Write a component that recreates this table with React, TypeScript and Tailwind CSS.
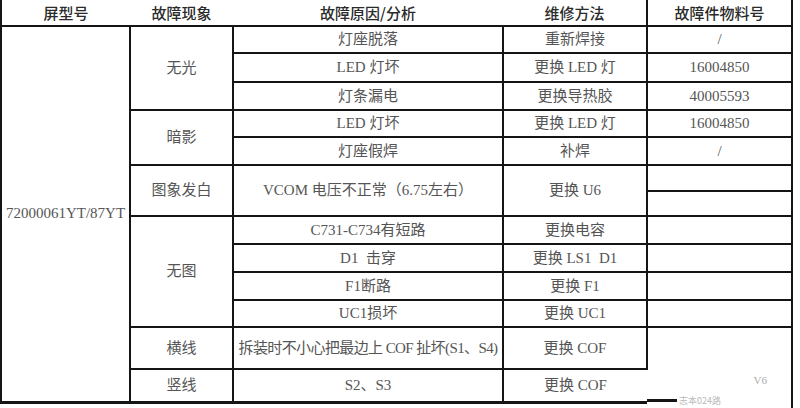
import React from "react";

const B = "border-[#151515]";
const body = "font-['Liberation_Serif','Noto_Sans_CJK_SC',serif] text-[15px] text-[#555] text-center align-middle p-0 leading-none whitespace-nowrap";
const cell = `${body} border-2 ${B}`;
const head = "font-['Noto_Sans_CJK_SC',sans-serif] font-medium text-[15px] text-[#2a2a2a] text-center p-0 leading-none";

export default function App() {
  return (
    <div className="w-[800px] h-[408px] bg-white overflow-hidden">
      <table className="border-collapse table-fixed w-[791px]">
        <colgroup>
          <col className="w-[129px]" />
          <col className="w-[103px]" />
          <col className="w-[270px]" />
          <col className="w-[144px]" />
          <col className="w-[145px]" />
        </colgroup>
        <tbody>
          <tr className="h-[26px]">
            {["屏型号", "故障现象", "故障原因/分析", "维修方法"].map((t, i) => (
              <td key={t} className={`${head} border-b-2 ${B} ${i === 0 ? "border-l-2" : ""}`}>
                {t}
              </td>
            ))}
            <td className={`${head} border-b-2 border-l-2 border-r-2 ${B}`}>故障件物料号</td>
          </tr>
          <tr className="h-[27px]">
            <td rowSpan={13} className={`${cell} border-b-[3px]`}>72000061YT/87YT</td>
            <td rowSpan={3} className={cell}>无光</td>
            <td className={cell}>灯座脱落</td>
            <td className={cell}>重新焊接</td>
            <td className={cell}>/</td>
          </tr>
          <tr className="h-[29px]">
            <td className={cell}>LED 灯坏</td>
            <td className={cell}>更换 LED 灯</td>
            <td className={cell}>16004850</td>
          </tr>
          <tr className="h-[28px]">
            <td className={cell}>灯条漏电</td>
            <td className={cell}>更换导热胶</td>
            <td className={cell}>40005593</td>
          </tr>
          <tr className="h-[27px]">
            <td rowSpan={2} className={cell}>暗影</td>
            <td className={cell}>LED 灯坏</td>
            <td className={cell}>更换 LED 灯</td>
            <td className={cell}>16004850</td>
          </tr>
          <tr className="h-[28px]">
            <td className={cell}>灯座假焊</td>
            <td className={cell}>补焊</td>
            <td className={cell}>/</td>
          </tr>
          <tr className="h-[26px]">
            <td rowSpan={2} className={cell}>图象发白</td>
            <td rowSpan={2} className={cell}>VCOM 电压不正常（6.75左右）</td>
            <td rowSpan={2} className={cell}>更换 U6</td>
            <td className={cell}></td>
          </tr>
          <tr className="h-[25px]">
            <td className={cell}></td>
          </tr>
          <tr className="h-[28px]">
            <td rowSpan={4} className={cell}>无图</td>
            <td className={cell}>C731-C734有短路</td>
            <td className={cell}>更换电容</td>
            <td className={cell}></td>
          </tr>
          <tr className="h-[28px]">
            <td className={cell}>D1&nbsp;&nbsp;击穿</td>
            <td className={cell}>更换 LS1&nbsp;&nbsp;D1</td>
            <td className={cell}></td>
          </tr>
          <tr className="h-[28px]">
            <td className={cell}>F1断路</td>
            <td className={cell}>更换 F1</td>
            <td className={cell}></td>
          </tr>
          <tr className="h-[27px]">
            <td className={cell}>UC1损坏</td>
            <td className={cell}>更换 UC1</td>
            <td className={cell}></td>
          </tr>
          <tr className="h-[42px]">
            <td className={cell}>横线</td>
            <td className={`${cell} tracking-[-0.6px]`}>拆装时不小心把最边上 COF 扯坏(S1、S4)</td>
            <td className={cell}>更换 COF</td>
            <td className={`${body} border-t-2 border-r-2 border-l-2 ${B}`}></td>
          </tr>
          <tr className="h-[33px]">
            <td className={`${cell} border-b-[3px]`}>竖线</td>
            <td className={`${cell} border-b-[3px]`}>S2、S3</td>
            <td className={`${body} border-2 border-r-0 border-b-[3px] ${B}`}>更换 COF</td>
            <td className={`${body} border-r-2 ${B} relative`}>
              <div className="absolute left-0 bottom-0 w-[30px] h-[3px] bg-[#151515]" />
              <div className="absolute right-[-2px] bottom-[-6px] w-[2px] h-[8px] bg-[#151515]" />
              <span className="absolute right-[24px] top-[6px] text-[11px] text-[#aaa] font-['Liberation_Serif',serif]">V6</span>
              <span className="absolute left-[32px] bottom-[-3px] text-[9px] leading-none text-[#bbb] font-['Noto_Sans_CJK_SC',sans-serif]">志本024路</span>
            </td>
          </tr>
        </tbody>
      </table>
    </div>
  );
}
